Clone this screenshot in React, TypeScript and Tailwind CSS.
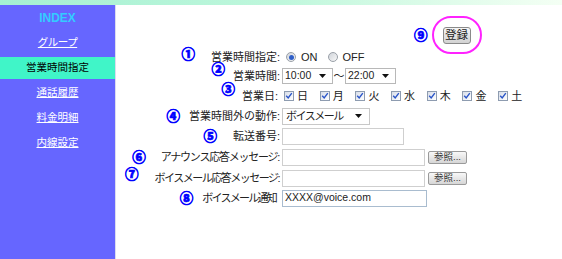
import React from "react";

const Num = ({ n, cls }: { n: string; cls: string }) => (
  <span className={"font-['Noto_Sans_CJK_JP',sans-serif] text-[13.5px] leading-none font-black text-[#0000ff] [-webkit-text-stroke:0.7px_#0000ff] " + cls}>{n}</span>
);

const Check = ({ label }: { label: string }) => (
  <span className="flex items-center w-[35.7px] shrink-0">
    <span className="w-[10px] h-[10px] border border-[#8e9cb0] bg-linear-to-br from-[#d8dee9] to-white flex items-center justify-center">
      <svg width="8" height="8" viewBox="0 0 8 8">
        <path d="M1.2 3.8 L3.2 6 L6.8 1.2" stroke="#2a55c8" strokeWidth="1.4" fill="none" />
      </svg>
    </span>
    <span className="ml-[3px]">{label}</span>
  </span>
);

const Arrow = () => (
  <svg width="7" height="4" viewBox="0 0 7 4" className="shrink-0">
    <path d="M0 0 H7 L3.5 4 Z" fill="#111" />
  </svg>
);

const Radio = ({ on }: { on: boolean }) => (
  <span className="w-[10px] h-[10px] rounded-full border border-[#9aa0a8] bg-linear-to-br from-[#d0d4da] to-[#f8f8f8] flex items-center justify-center">
    {on && <span className="w-[5px] h-[5px] rounded-full bg-[#2f5fc8]" />}
  </span>
);

const Browse = () => (
  <span className="ml-[3px] w-[39px] h-[13px] rounded-[2px] border border-[#9a9a9a] bg-linear-to-b from-[#f8f8f8] to-[#d6d6d6] flex items-center justify-center text-[9.5px] leading-none text-[#333]">
    参照...
  </span>
);

export default function App() {
  return (
    <div className="w-[562px] h-[259px] flex flex-col bg-white overflow-hidden font-['Liberation_Sans','Noto_Sans_CJK_JP',sans-serif] text-[#222] whitespace-nowrap">
      <div className="h-[5px] bg-linear-to-r from-[#a4f0d2] via-[#bff7dc] to-[#f4fff4]" />
      <div className="flex flex-1">
        {/* Sidebar */}
        <div className="w-[116px] bg-[#6666ff] border-r border-[#dcdcee] flex flex-col text-[10.5px]">
          <div className="h-[25px] flex items-center justify-center text-[12px] font-bold text-[#33ccff]">INDEX</div>
          <div className="h-[25px] flex items-center justify-center text-white underline tracking-[-0.5px]">グループ</div>
          <div className="h-[25px] flex items-center">
            <div className="w-full h-[22px] bg-[#40f5c8] flex items-center justify-center text-black">営業時間指定</div>
          </div>
          <div className="h-[25px] flex items-center justify-center text-white underline">通話履歴</div>
          <div className="h-[25px] flex items-center justify-center text-white underline">料金明細</div>
          <div className="h-[25px] flex items-center justify-center text-white underline">内線設定</div>
        </div>

        {/* Main */}
        <div className="flex-1 flex flex-col text-[11px]">
          <div className="h-[43px] flex items-start pt-[22px] pl-[298px]">
            <Num n="⑨" cls="mt-[1px]" />
            <span className="relative ml-[15px]">
              <span className="absolute left-[-11px] top-[-11px] w-[50px] h-[38px] rounded-full border-2 border-[#ff22ff]" />
              <span className="w-[28px] h-[17px] rounded-[3px] border border-[#8a8a8a] bg-linear-to-b from-[#f6f6f6] to-[#d2d2d2] flex items-center justify-center text-[11.5px] leading-none text-[#222]">
                登録
              </span>
            </span>
          </div>

          <div className="grid grid-cols-[164px_1fr] gap-x-[2px]">
            {/* row 1 */}
            <div className="h-[18px] flex items-center justify-end">
              <Num n="①" cls="-translate-y-[3px] mr-[16px]" />
              <span>営業時間指定:</span>
            </div>
            <div className="h-[18px] flex items-center">
              <span className="ml-[4px]"><Radio on /></span>
              <span className="ml-[5px] text-[11px]">ON</span>
              <span className="ml-[10px]"><Radio on={false} /></span>
              <span className="ml-[5px] text-[11px]">OFF</span>
            </div>

            {/* row 2 */}
            <div className="h-[20px] flex items-center justify-end">
              <Num n="②" cls="-translate-y-[7px] mr-[8px]" />
              <span>営業時間:</span>
            </div>
            <div className="h-[20px] flex items-center">
              <span className="w-[51px] h-[16px] border border-[#b8b8b8] flex items-center justify-between pl-[2px] pr-[6px] text-[10.5px]">
                10:00 <Arrow />
              </span>
              <span className="w-[12px] text-center">〜</span>
              <span className="w-[51px] h-[16px] border border-[#b8b8b8] flex items-center justify-between pl-[2px] pr-[6px] text-[10.5px]">
                22:00 <Arrow />
              </span>
            </div>

            {/* row 3 */}
            <div className="h-[20px] flex items-center justify-end">
              <Num n="③" cls="-translate-y-[7px] mr-[7px]" />
              <span className="mr-[2px]">営業日:</span>
            </div>
            <div className="h-[20px] flex items-center pl-[2px]">
              {["日", "月", "火", "水", "木", "金", "土"].map((d) => (
                <Check key={d} label={d} />
              ))}
            </div>

            {/* row 4 */}
            <div className="h-[20px] flex items-center justify-end">
              <Num n="④" cls="mr-[9px]" />
              <span>営業時間外の動作:</span>
            </div>
            <div className="h-[20px] flex items-center">
              <span className="w-[88px] h-[17px] border border-[#c8c8c8] flex items-center justify-between pl-[3px] pr-[7px]">
                <span className="tracking-[-1.5px]">ボイスメール</span> <Arrow />
              </span>
            </div>

            {/* row 5 */}
            <div className="h-[20px] flex items-center justify-end">
              <Num n="⑤" cls="mr-[16px]" />
              <span>転送番号:</span>
            </div>
            <div className="h-[20px] flex items-center">
              <span className="w-[122px] h-[17px] border border-[#cfcfcf]" />
            </div>

            {/* row 6 */}
            <div className="h-[22px] flex items-center justify-end">
              <Num n="⑥" cls="mr-[15px]" />
              <span className="tracking-[-1.25px] mr-[1px]">アナウンス応答メッセージ:</span>
            </div>
            <div className="h-[22px] flex items-center">
              <span className="w-[143px] h-[17px] border border-[#cfcfcf]" />
              <Browse />
            </div>

            {/* row 7 */}
            <div className="h-[20px] flex items-center justify-end">
              <Num n="⑦" cls="-translate-y-[4px] mr-[16px]" />
              <span className="tracking-[-1.5px] mr-[1px]">ボイスメール応答メッセージ:</span>
            </div>
            <div className="h-[20px] flex items-center">
              <span className="w-[143px] h-[17px] border border-[#cfcfcf]" />
              <Browse />
            </div>

            {/* row 8 */}
            <div className="h-[20px] flex items-center justify-end">
              <Num n="⑧" cls="mr-[9px]" />
              <span className="mr-[4px] tracking-[-1.75px]">ボイスメール通知</span>
            </div>
            <div className="h-[20px] flex items-center">
              <span className="w-[145px] h-[17px] border border-[#a9bccf] flex items-center pl-[2px] text-[10.5px]">
                XXXX@voice.com
              </span>
            </div>
          </div>
        </div>
      </div>
    </div>
  );
}
